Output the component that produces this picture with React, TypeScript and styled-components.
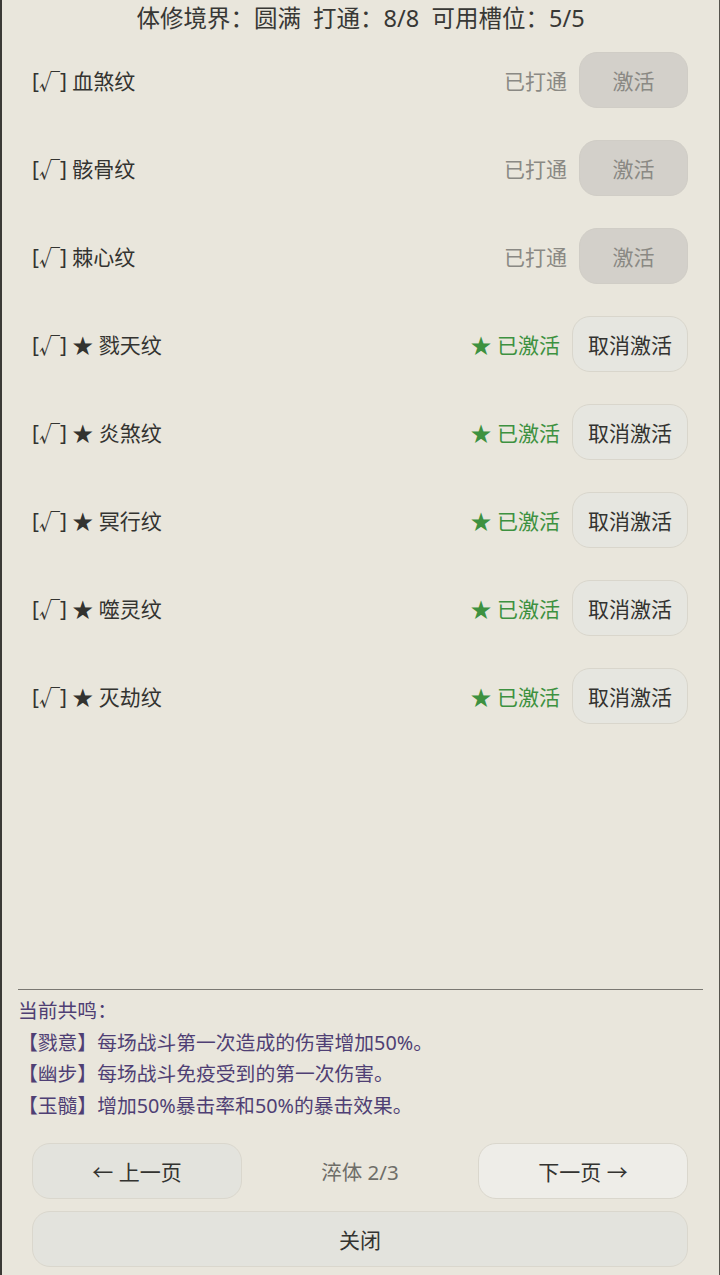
import React from "react";
import styled, { createGlobalStyle } from "styled-components";

const GlobalStyle = createGlobalStyle`
  html, body {
    margin: 0;
    padding: 0;
    background: #e9e6dc;
  }
  * {
    box-sizing: border-box;
  }
`;

const Page = styled.div`
  height: 1275px;
  display: flex;
  flex-direction: column;
  background: #e9e6dc;
  border-left: 2px solid #3b3a36;
  border-right: 1px solid #55534d;
  font-family: "Noto Sans", "Noto Sans CJK SC", sans-serif;
  color: #333330;
`;

const Header = styled.div`
  height: 36px;
  display: flex;
  align-items: center;
  justify-content: center;
  font-size: 23.5px;
  color: #383835;
  white-space: pre;
  padding-bottom: 2px;
`;

const List = styled.div`
  flex: 1;
  display: flex;
  flex-direction: column;
  padding: 0 31px 0 30px;
`;

const Row = styled.div`
  height: 88px;
  display: flex;
  align-items: center;
  gap: 12px;
`;

const Name = styled.div`
  flex: 1;
  font-size: 21px;
  color: #333330;
`;

const Status = styled.div<{ $active?: boolean }>`
  font-size: 21px;
  color: ${(p) => (p.$active ? "#3d9140" : "#8a8984")};
`;

const ActionButton = styled.button<{ $active?: boolean }>`
  height: 56px;
  width: ${(p) => (p.$active ? "116px" : "109px")};
  border-radius: 18px;
  font-family: inherit;
  font-size: 21px;
  border: 1px solid ${(p) => (p.$active ? "#d9d6cc" : "#d0cdc6")};
  background: ${(p) => (p.$active ? "#e6e6e0" : "#d3d0ca")};
  color: ${(p) => (p.$active ? "#333330" : "#8a8984")};
  padding: 0;
`;

const Divider = styled.div`
  height: 1px;
  margin: 0 16px;
  background: #7a7872;
`;

const Resonance = styled.div`
  padding: 5px 16px 0;
  font-size: 19.8px;
  line-height: 31.5px;
  color: #4f3f74;
`;

const Line = styled.div``;

const Footer = styled.div`
  display: flex;
  flex-direction: column;
  gap: 12px;
  padding: 22px 31px 8px 30px;
`;

const NavRow = styled.div`
  display: flex;
  align-items: center;
  justify-content: space-between;
`;

const NavButton = styled.button<{ $light?: boolean }>`
  height: 56px;
  width: 210px;
  border-radius: 18px;
  border: 1px solid #dad7cd;
  background: ${(p) => (p.$light ? "#eeede8" : "#e3e3dd")};
  font-family: inherit;
  font-size: 21px;
  color: #333330;
  padding: 0;
`;

const PageLabel = styled.div`
  font-size: 20.5px;
  color: #6e6d68;
`;

const CloseButton = styled(NavButton)`
  width: 100%;
`;

type Item = { name: string; active: boolean };

const items: Item[] = [
  { name: "血煞纹", active: false },
  { name: "骸骨纹", active: false },
  { name: "棘心纹", active: false },
  { name: "戮天纹", active: true },
  { name: "炎煞纹", active: true },
  { name: "冥行纹", active: true },
  { name: "噬灵纹", active: true },
  { name: "灭劫纹", active: true },
];

const lines = [
  "【戮意】每场战斗第一次造成的伤害增加50%。",
  "【幽步】每场战斗免疫受到的第一次伤害。",
  "【玉髓】增加50%暴击率和50%的暴击效果。",
];

const App = () => {
  return (
    <Page>
      <GlobalStyle />
      <Header>体修境界：圆满  打通：8/8  可用槽位：5/5</Header>
      <List>
        {items.map((it) => (
          <Row key={it.name}>
            <Name>
              [√] {it.active ? "★ " : ""}
              {it.name}
            </Name>
            <Status $active={it.active}>{it.active ? "★ 已激活" : "已打通"}</Status>
            <ActionButton $active={it.active}>{it.active ? "取消激活" : "激活"}</ActionButton>
          </Row>
        ))}
      </List>
      <Divider />
      <Resonance>
        <Line>当前共鸣：</Line>
        {lines.map((l) => (
          <Line key={l}>{l}</Line>
        ))}
      </Resonance>
      <Footer>
        <NavRow>
          <NavButton>← 上一页</NavButton>
          <PageLabel>淬体 2/3</PageLabel>
          <NavButton $light>下一页 →</NavButton>
        </NavRow>
        <CloseButton>关闭</CloseButton>
      </Footer>
    </Page>
  );
};

export default App;
